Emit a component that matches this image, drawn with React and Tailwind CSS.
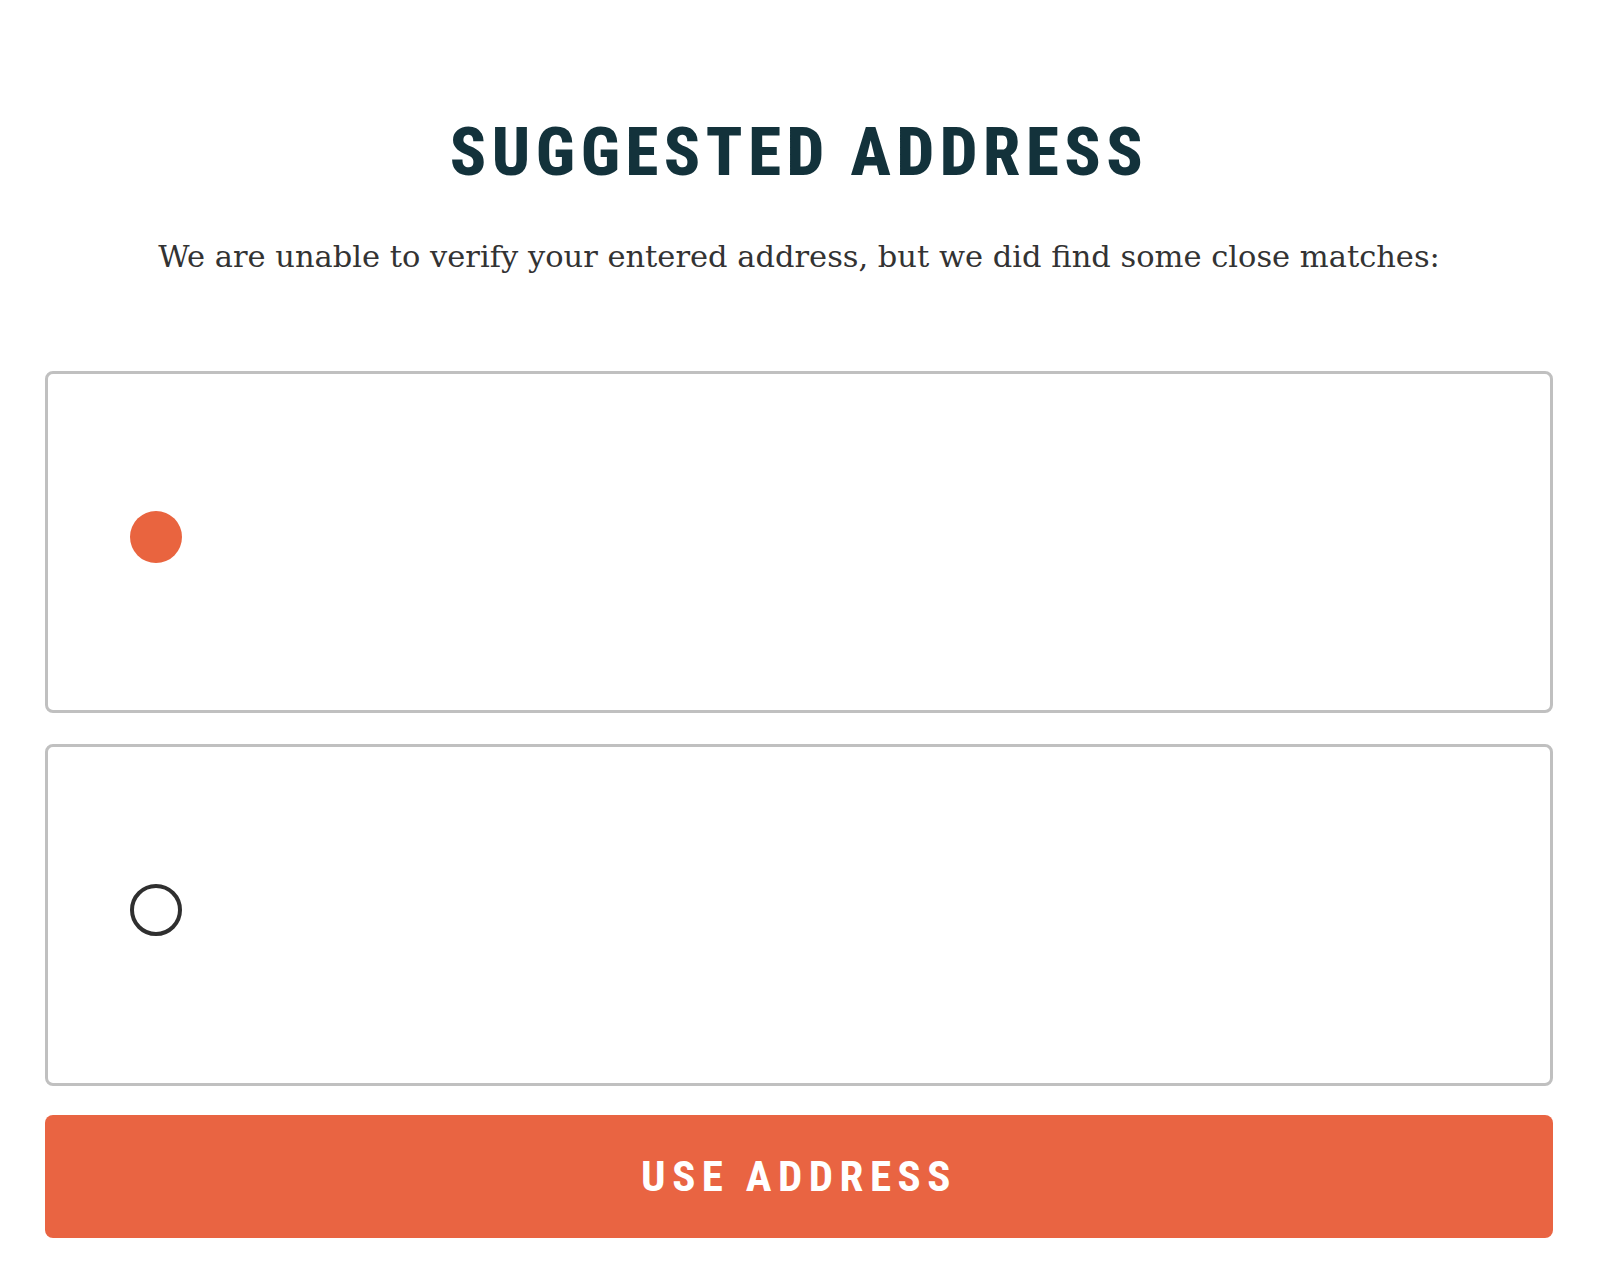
import React, {useState} from 'react';

function AddressOption({selected, onSelect}) {
    return (
        <button
            type="button"
            onClick={onSelect}
            className="flex h-[342px] w-full items-center rounded-[8px] border-[3px] border-[#c0c0c0] bg-white pb-[10px] pl-[82px] text-left"
        >
            {selected ? (
                <span className="block h-[52px] w-[52px] rounded-full bg-[#e9643f]"/>
            ) : (
                <span className="block h-[52px] w-[52px] rounded-full border-[4px] border-[#2f2f2f]"/>
            )}
        </button>
    );
}

export default function App() {
    const [choice, setChoice] = useState(0);

    return (
        <div className="min-h-[1288px] bg-white pl-[45px] pr-[51px] pt-[119px]">
            <h1 className="text-center text-[67px] font-extrabold leading-none tracking-[5.5px] text-[#13323b] font-stretch-condensed [font-family:'Roboto',sans-serif]">
                SUGGESTED ADDRESS
            </h1>
            <p className="mt-[56px] text-center text-[30.5px] leading-none text-[#333333] [font-family:'DejaVu_Serif',serif]">
                We are unable to verify your entered address, but we did find some close matches:
            </p>

            <div className="mt-[98px] flex flex-col gap-[31px]">
                <AddressOption selected={choice === 0} onSelect={() => setChoice(0)}/>
                <AddressOption selected={choice === 1} onSelect={() => setChoice(1)}/>
            </div>

            <button
                type="button"
                className="mt-[29px] flex h-[123px] w-full items-center justify-center rounded-[8px] bg-[#e96442] text-[43px] font-bold tracking-[6.5px] text-white font-stretch-condensed [font-family:'Roboto',sans-serif]"
            >
                USE ADDRESS
            </button>
        </div>
    );
}
